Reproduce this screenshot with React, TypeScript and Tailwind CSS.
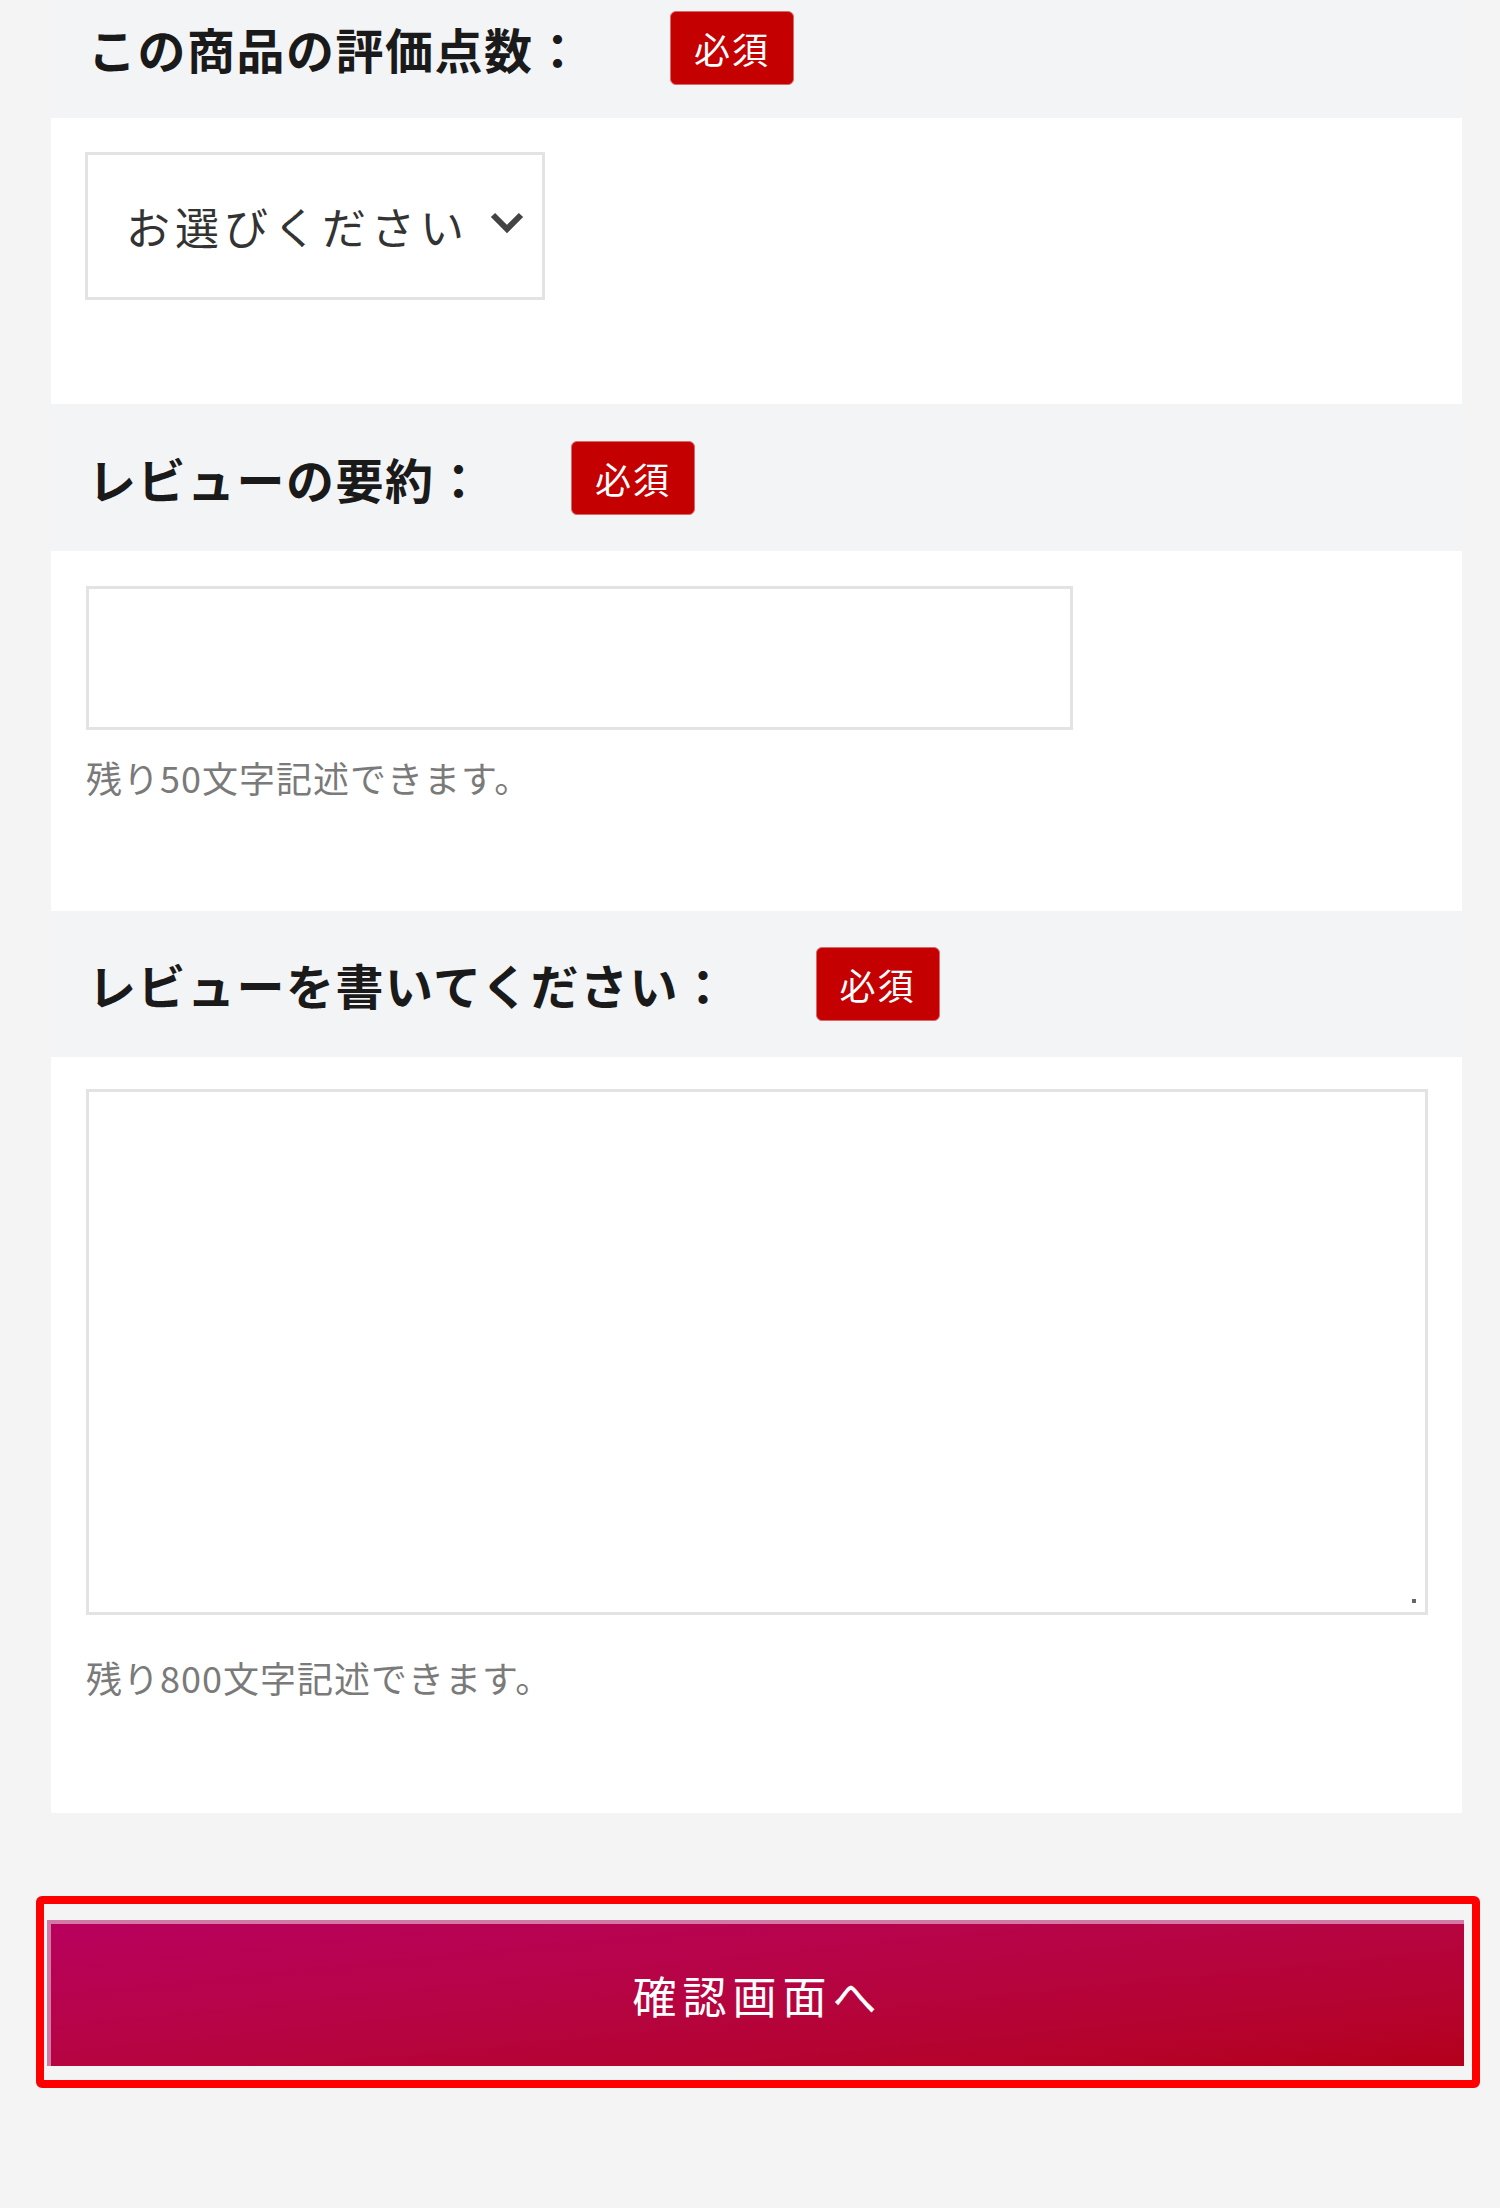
import React from "react";

const FONT = { fontFamily: '"Noto Sans CJK JP", "Noto Sans", sans-serif' };

function Badge() {
  return (
    <span className="ml-[87px] flex h-[74px] w-[124px] items-center justify-center rounded-[6px] border border-[#d86a6a] bg-[#c40000] text-[36px] leading-none tracking-[2px] text-white">
      必須
    </span>
  );
}

function Heading({ label, className }: { label: string; className: string }) {
  return (
    <div className={`flex items-center bg-[#f3f4f5] pl-[37px] ${className}`}>
      <span className="text-[48px] font-bold leading-none tracking-[1.5px] text-[#1a1a1a]">{label}</span>
      <Badge />
    </div>
  );
}

export default function App() {
  return (
    <div className="min-h-[2208px] w-[1500px] bg-[#f4f4f4]" style={FONT}>
      <div className="ml-[51px] w-[1411px]">
        <Heading label="この商品の評価点数：" className="h-[118px] pb-[22px]" />
        <div className="h-[286px] bg-white pl-[34px] pt-[34px]">
          <div className="flex h-[148px] w-[460px] items-center border-[3px] border-[#e3e3e3] bg-white pl-[38px]">
            <span className="text-[44px] leading-none tracking-[5px] text-[#333]">お選びください</span>
            <svg className="ml-[20px] mt-[-6px]" width="36" height="26" viewBox="0 0 36 26">
              <path d="M4 5 L18 19 L32 5" fill="none" stroke="#444" strokeWidth="6" />
            </svg>
          </div>
        </div>

        <Heading label="レビューの要約：" className="h-[147px]" />
        <div className="h-[360px] bg-white pl-[35px] pt-[35px]">
          <div className="h-[144px] w-[987px] border-[3px] border-[#e3e3e3] bg-white" />
          <p className="mt-[25px] text-[36px] leading-[44px] tracking-[1px] text-[#7a7a7a]">残り50文字記述できます。</p>
        </div>

        <Heading label="レビューを書いてください：" className="h-[146px]" />
        <div className="h-[756px] bg-white pl-[35px] pt-[32px]">
          <div className="relative h-[526px] w-[1342px] border-[3px] border-[#e3e3e3] bg-white">
            <span className="absolute bottom-[9px] right-[9px] h-[4px] w-[4px] bg-[#666]" />
          </div>
          <p className="mt-[40px] text-[36px] leading-[44px] tracking-[1px] text-[#7a7a7a]">残り800文字記述できます。</p>
        </div>
      </div>

      <div className="ml-[36px] mt-[83px] w-[1444px] rounded-[6px] border-[8px] border-[#ff0000] bg-[#f4f4f4] pb-[14px] pl-[3px] pr-[8px] pt-[16px]">
        <button className="flex h-[146px] w-full items-center justify-center border-l-[4px] border-t-[4px] border-[#d27aa5] bg-gradient-to-br from-[#b8005d] to-[#b4001a] text-[44px] leading-none tracking-[6px] text-white">
          確認画面へ
        </button>
      </div>
    </div>
  );
}
